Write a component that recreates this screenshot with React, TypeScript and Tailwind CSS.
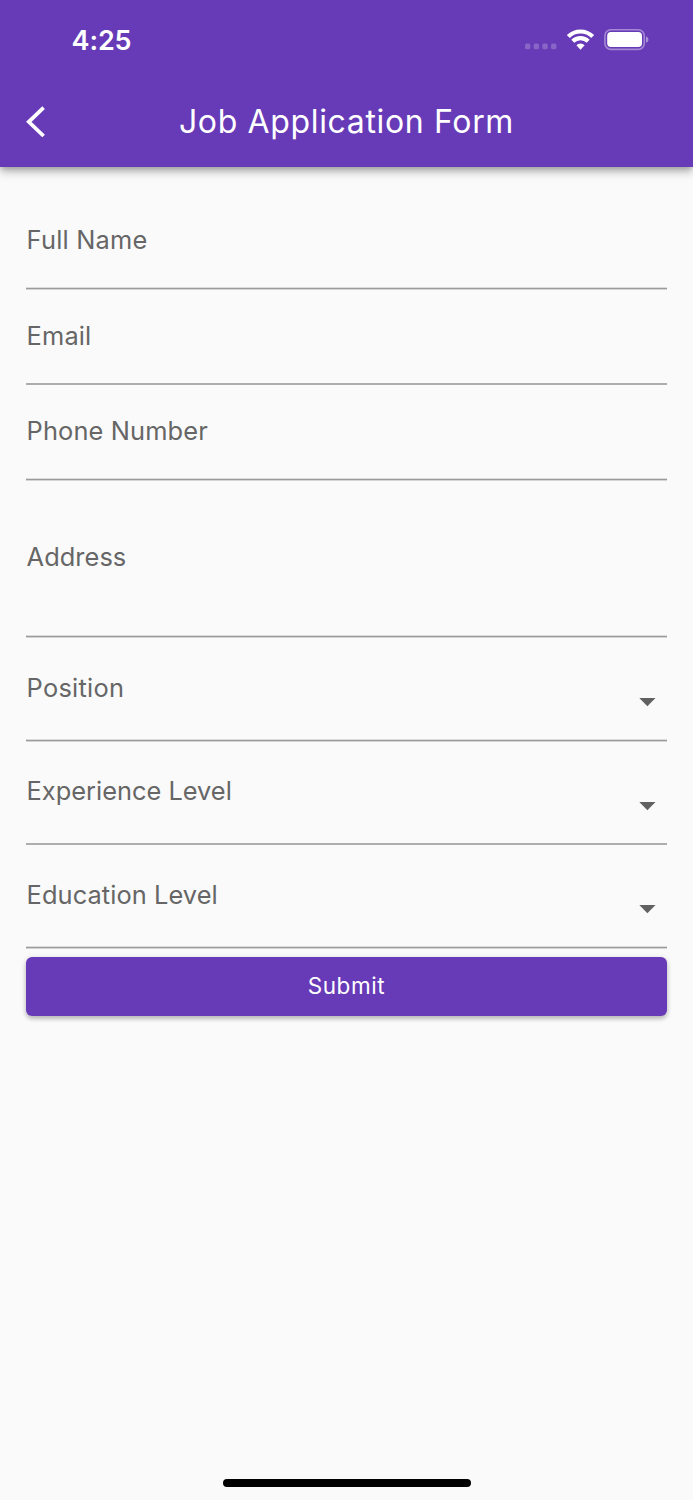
import { useState } from "react";
import type { ReactNode } from "react";

type Field = {
    id: string;
    label: string;
    rowClass: string;
    labelClass: string;
    arrowClass?: string;
};

// underline that falls on a whole pixel, with a faint edge either side
const THIN_LINE =
    "border-b border-[#9b9b9b] shadow-[0_1px_0_#d4d4d4,inset_0_-1px_0_#dcdcdc]";
// underline that straddles two pixels
const WIDE_LINE = "border-b-2 border-[#adadad]";

const FIELDS: Field[] = [
    { id: "name", label: "Full Name", rowClass: `h-[94px] ${THIN_LINE}`, labelClass: "pt-[29px] tracking-[0.2px]" },
    { id: "email", label: "Email", rowClass: `h-[96px] ${WIDE_LINE}`, labelClass: "pt-[31px] tracking-[0.15px]" },
    { id: "phone", label: "Phone Number", rowClass: `h-[95px] ${THIN_LINE}`, labelClass: "pt-[30px] tracking-[0.13px]" },
    { id: "address", label: "Address", rowClass: `h-[157px] ${THIN_LINE}`, labelClass: "pt-[61px] tracking-[0.05px]" },
    {
        id: "position",
        label: "Position",
        rowClass: `h-[104px] ${THIN_LINE}`,
        labelClass: "pt-[35px] tracking-[0.25px]",
        arrowClass: "mt-[61px]",
    },
    {
        id: "experience",
        label: "Experience Level",
        rowClass: `h-[104px] ${WIDE_LINE}`,
        labelClass: "pt-[34px]",
        arrowClass: "mt-[61px]",
    },
    {
        id: "education",
        label: "Education Level",
        rowClass: `h-[103px] ${THIN_LINE}`,
        labelClass: "pt-[34px] tracking-[0.08px]",
        arrowClass: "mt-[60px]",
    },
];

function StatusBar() {
    return (
        <div className="flex h-20 items-center justify-between pr-[43px] pl-[71.5px]">
            <span className="pt-px text-[27px] leading-8 font-semibold tracking-[-0.1px]">4:25</span>
            <div className="flex items-center">
                <svg width="32" height="20" viewBox="0 0 32 20" fill="#fff" fillOpacity="0.22">
                    <rect x="0" y="13.6" width="5.4" height="5.6" rx="1.6" />
                    <rect x="8.7" y="13.6" width="5.4" height="5.6" rx="1.6" />
                    <rect x="17.3" y="13.6" width="5.4" height="5.6" rx="1.6" />
                    <rect x="26" y="13.6" width="5.4" height="5.6" rx="1.6" />
                </svg>
                <svg
                    className="ml-[9px]"
                    width="29"
                    height="22"
                    viewBox="0 0 29 22"
                    fill="none"
                    stroke="#fff"
                    strokeWidth="4.2"
                >
                    <path d="M2.3 7.5a17.4 17.4 0 0 1 24.4 0" />
                    <path d="M6.8 12.3a11 11 0 0 1 15.4 0" />
                    <path d="M14.5 20.7l-4.1-4.4a5.8 5.8 0 0 1 8.2 0z" fill="#fff" stroke="none" />
                </svg>
                <svg className="ml-[9px]" width="46" height="22" viewBox="0 0 46 22">
                    <rect x="0.9" y="0.8" width="39.4" height="19.6" rx="6" fill="none" stroke="#fff" strokeOpacity="0.4" strokeWidth="1.6" />
                    <rect x="3.2" y="3.1" width="34.8" height="15" rx="3.8" fill="#fff" />
                    <path d="M42 7.4c3.2 1.2 3.2 5.2 0 6.4z" fill="#fff" fillOpacity="0.45" />
                </svg>
            </div>
        </div>
    );
}

function FormRow({ field, children }: { field: Field; children?: ReactNode }) {
    return (
        <div className={`flex justify-between ${field.rowClass}`}>
            <label htmlFor={field.id} className={`pl-[0.6px] text-[25.4px] leading-8 text-[#666] ${field.labelClass}`}>
                {field.label}
            </label>
            {children}
        </div>
    );
}

export default function App() {
    const [submitted, setSubmitted] = useState<boolean>(false);

    return (
        <div className="flex min-h-[1500px] w-full flex-col bg-[#fafafa] font-[Inter,sans-serif]">
            <header className="z-10 h-[167px] bg-[#673ab7] text-white shadow-[0_3px_6px_-1px_rgba(0,0,0,0.25),0_6px_9px_rgba(0,0,0,0.14),0_1px_12px_rgba(0,0,0,0.1)]">
                <StatusBar />
                <div className="grid h-[84px] grid-cols-[60px_1fr_60px] items-center">
                    <button aria-label="Back" className="pl-[25px]">
                        <svg width="22" height="32" viewBox="0 0 22 32" fill="none" stroke="#fff" strokeWidth="3.8">
                            <path d="M18.6 1.6L3.8 15.8l14.8 14.2" />
                        </svg>
                    </button>
                    <h1 className="text-center text-[32px] leading-10 font-normal tracking-[0.65px]">
                        Job Application Form
                    </h1>
                </div>
            </header>

            <form
                className="flex flex-col px-[26px] pt-[28px]"
                onSubmit={(e) => {
                    e.preventDefault();
                    setSubmitted(true);
                }}
            >
                {FIELDS.map((field) => (
                    <FormRow key={field.id} field={field}>
                        {field.arrowClass && (
                            <svg
                                className={`mr-[11px] ${field.arrowClass}`}
                                width="17"
                                height="9"
                                viewBox="0 0 17 9"
                                fill="#616161"
                            >
                                <path d="M0.3 0h16.2L8.4 8.2z" />
                            </svg>
                        )}
                    </FormRow>
                ))}
                <button
                    type="submit"
                    disabled={submitted}
                    className="mt-[9px] h-[59px] rounded-md bg-[#673ab7] pb-[2px] text-[22.5px] font-normal tracking-[0.6px] text-white shadow-[0_3px_4px_rgba(0,0,0,0.2),0_1px_6px_rgba(0,0,0,0.12)]"
                >
                    Submit
                </button>
            </form>

            <div className="mx-auto mt-auto mb-[13px] h-2 w-[248px] rounded-full bg-black" />
        </div>
    );
}
